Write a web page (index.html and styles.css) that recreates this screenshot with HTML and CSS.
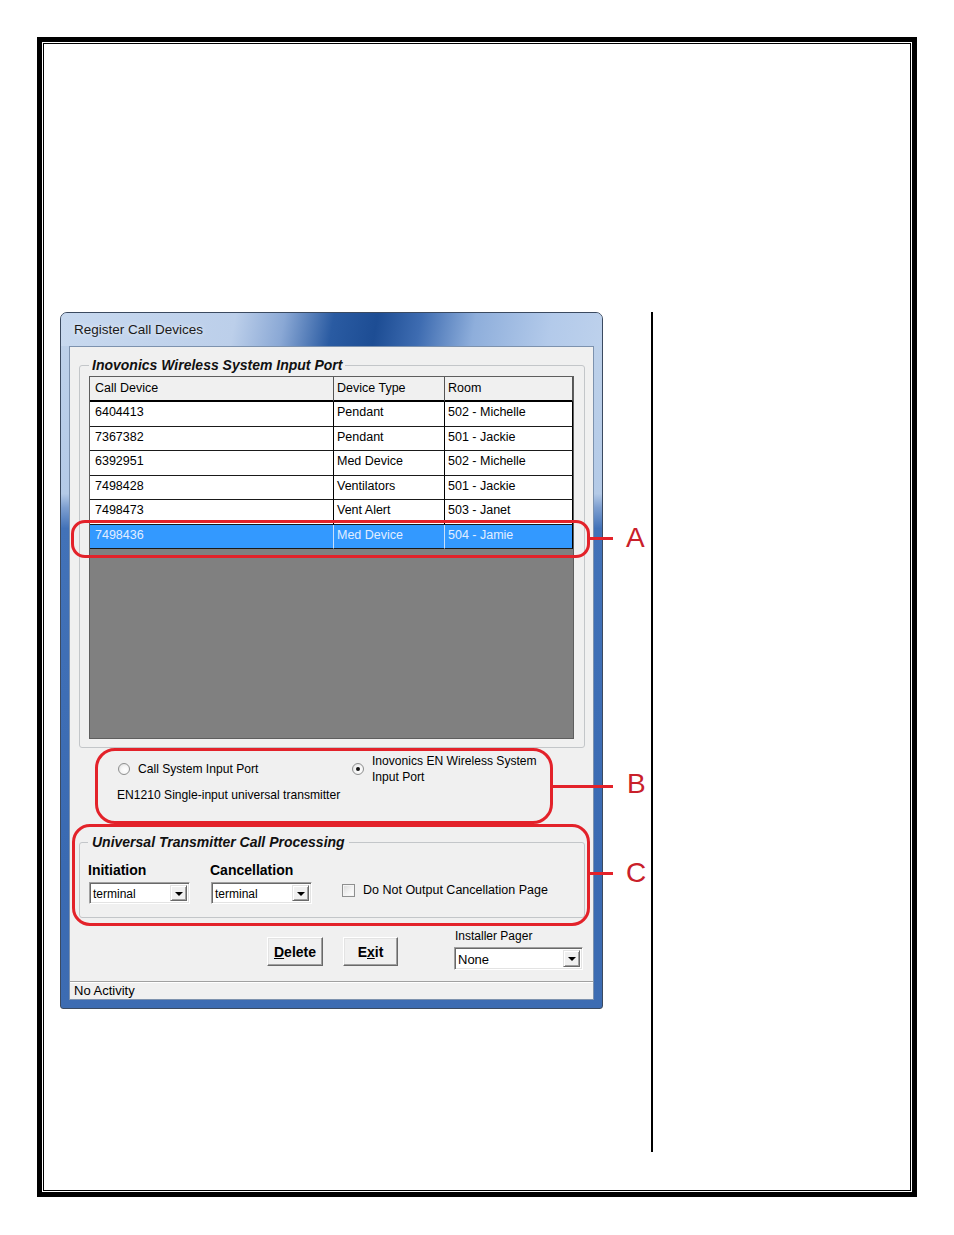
FILE: index.html
```html
<!DOCTYPE html>
<html>
<head>
<meta charset="utf-8">
<title>Register Call Devices</title>
<link rel="stylesheet" href="styles.css">
</head>
<body>
<div class="page">
  <div class="frame">
    <div class="frame-inner">
      <div class="figure">
        <div class="window">
          <div class="titlebar"><span class="title">Register Call Devices</span></div>
          <div class="client">
            <fieldset class="group group-devices">
              <legend>Inovonics Wireless System Input Port</legend>
              <div class="grid">
                <table>
                  <colgroup><col class="c1"><col class="c2"><col class="c3"></colgroup>
                  <thead>
                    <tr><th>Call Device</th><th>Device Type</th><th>Room</th></tr>
                  </thead>
                  <tbody>
                    <tr><td>6404413</td><td>Pendant</td><td>502 - Michelle</td></tr>
                    <tr><td>7367382</td><td>Pendant</td><td>501 - Jackie</td></tr>
                    <tr><td>6392951</td><td>Med Device</td><td>502 - Michelle</td></tr>
                    <tr><td>7498428</td><td>Ventilators</td><td>501 - Jackie</td></tr>
                    <tr><td>7498473</td><td>Vent Alert</td><td>503 - Janet</td></tr>
                    <tr class="selected"><td>7498436</td><td>Med Device</td><td>504 - Jamie</td></tr>
                  </tbody>
                </table>
              </div>
            </fieldset>
            <div class="ports">
              <div class="port-options">
                <div class="radio"><span class="radio-dot"></span><span>Call System Input Port</span></div>
                <div class="radio radio-on"><span class="radio-dot"></span><span>Inovonics EN Wireless System<br>Input Port</span></div>
              </div>
              <div class="port-desc">EN1210 Single-input universal transmitter</div>
            </div>
            <fieldset class="group group-proc">
              <legend>Universal Transmitter Call Processing</legend>
              <div class="proc-row">
                <div class="field field-init">
                  <div class="field-label">Initiation</div>
                  <div class="combo"><span class="combo-text">terminal</span><span class="combo-btn"></span></div>
                </div>
                <div class="field field-cancel">
                  <div class="field-label">Cancellation</div>
                  <div class="combo"><span class="combo-text">terminal</span><span class="combo-btn"></span></div>
                </div>
                <div class="check"><span class="check-box"></span><span>Do Not Output Cancellation Page</span></div>
              </div>
            </fieldset>
            <div class="actions">
              <button class="btn btn-delete"><u>D</u>elete</button>
              <button class="btn btn-exit">E<u>x</u>it</button>
              <div class="pager">
                <div class="pager-label">Installer Pager</div>
                <div class="combo combo-pager"><span class="combo-text">None</span><span class="combo-btn"></span></div>
              </div>
            </div>
            <div class="status">No Activity</div>
          </div>
        </div>
        <div class="note note-a"></div>
        <div class="lead lead-a"></div>
        <div class="tag tag-a">A</div>
        <div class="note note-b"></div>
        <div class="lead lead-b"></div>
        <div class="tag tag-b">B</div>
        <div class="note note-c"></div>
        <div class="lead lead-c"></div>
        <div class="tag tag-c">C</div>
      </div>
      <div class="vline"></div>
    </div>
  </div>
</div>
</body>
</html>
```

FILE: styles.css
```css
* { box-sizing: border-box; }
html, body { margin: 0; padding: 0; background: #fff; }
body {
  font-family: "Liberation Sans", Arial, sans-serif;
  color: #000;
  width: 954px;
  height: 1235px;
}

.page { padding: 37px 0 0 37px; }
.frame {
  width: 880px;
  height: 1160px;
  border: 5px solid #000;
  padding: 1px;
  background: #fff;
}
.frame-inner {
  height: 100%;
  border: 1px solid #000;
  padding: 268px 0 0 16px;
  display: flex;
  align-items: flex-start;
}
.figure { position: relative; width: 591px; flex: none; }
.vline { width: 2px; height: 840px; background: #000; flex: none; }

/* window */
.window {
  width: 543px;
  border: 1px solid #3b4a60;
  border-radius: 7px 7px 3px 3px;
  padding: 0 8px 8px;
  background: linear-gradient(to bottom, #bfd2ea 0%, #b4cae7 26%, #7e9fd0 28%, #4272b8 31%, #3a6ab2 80%, #3d6cb2 100%);
}
.titlebar {
  height: 33px;
  margin: 0 -8px;
  padding: 0 0 1px 13px;
  display: flex;
  align-items: center;
  border-radius: 6px 6px 0 0;
  background: linear-gradient(100deg, #c8d9ef 0%, #bccfea 32%, #8aa8d5 41%, #2a5ba2 50%, #1d4d94 58%, #3e6cb1 66%, #8eaedb 76%, #b3caea 90%, #bdd1ec 100%);
}
.title { font-size: 13.5px; color: #1a1a1a; text-shadow: 0 0 5px rgba(255,255,255,.85); }
.client {
  border: 1px solid #7d92ae;
  background: #f0f0f0;
}

/* group boxes */
.group {
  border: 1px solid #c3c6c9;
  border-radius: 3px;
  min-width: 0;
}
.group legend {
  font-size: 14px;
  font-weight: bold;
  font-style: italic;
  line-height: 16px;
  color: #111;
}
.group-devices { margin: 10px 8px 0 9px; padding: 3px 10px 8px 9px; }
.group-devices legend { padding: 0 3px; }

/* data grid */
.grid {
  height: 363px;
  border: 1px solid #5e5e5e;
  background: #808080;
  overflow: hidden;
}
.grid table {
  width: 483px;
  border-collapse: separate;
  border-spacing: 0;
  table-layout: fixed;
  font-size: 12.5px;
}
.c1 { width: 244px; }
.c2 { width: 111px; }
.c3 { width: 128px; }
.grid thead tr { height: 25px; }
.grid tbody tr { height: 24.5px; }
.grid th {
  background: #f0f0f0;
  font-weight: normal;
  text-align: left;
  padding: 0 0 0 3px;
  border-right: 1px solid #555;
  border-bottom: 2px solid #000;
  vertical-align: middle;
  line-height: 15px;
}
.grid td {
  background: #fff;
  padding: 3px 3px 0;
  border-right: 1px solid #000;
  border-bottom: 1px solid #1a1a1a;
  vertical-align: top;
  line-height: 15px;
  white-space: nowrap;
}
.grid th:first-child, .grid td:first-child { padding-left: 5px; }
.grid tr.selected td {
  background: #3399ff;
  color: #e2eeff;
  border-right-color: #c9e0fa;
}
.grid tr.selected td:last-child { border-right-color: #000; }

/* port choice */
.ports { padding: 5px 0 0 48px; font-size: 12.1px; line-height: 16px; }
.port-options {
  display: grid;
  grid-template-columns: 234px auto;
  align-items: center;
}
.radio { display: flex; align-items: center; gap: 8px; }
.radio-dot {
  position: relative;
  flex: none;
  width: 12px;
  height: 12px;
  border-radius: 50%;
  border: 1px solid #8e8f8f;
  background: radial-gradient(circle at 60% 60%, #ffffff 0%, #f6f6f6 45%, #d6d6d6 100%);
}
.radio-on .radio-dot::after {
  content: "";
  position: absolute;
  left: 3px;
  top: 3px;
  width: 4px;
  height: 4px;
  border-radius: 50%;
  background: #121212;
}
.port-desc { margin: 2px 0 0 -1px; }

/* call processing */
.group-proc { margin: 31px 8px 0 9px; padding: 12px 10px 13px 8px; }
.group-proc legend { padding: 0 4px; }
.proc-row { display: flex; align-items: flex-end; }
.field-label { font-size: 14px; font-weight: bold; line-height: 16px; }
.field-init { width: 122px; flex: none; }
.field-cancel { width: 132px; flex: none; }
.field .combo { margin: 4px 0 0 1px; width: 101px; }

.combo {
  display: flex;
  align-items: stretch;
  height: 22px;
  background: #fff;
  border: 1px solid;
  border-color: #a0a0a0 #ffffff #ffffff #a0a0a0;
  box-shadow: inset 1px 1px 0 #696969, inset -1px -1px 0 #e3e3e3;
  font-size: 12px;
}
.combo-text {
  flex: 1;
  padding: 1px 0 0 3px;
  display: flex;
  align-items: center;
}
.combo-btn {
  flex: none;
  width: 17px;
  margin: 2px 2px 2px 0;
  background: #f0f0f0;
  border: 1px solid;
  border-color: #e3e3e3 #696969 #696969 #e3e3e3;
  box-shadow: inset 1px 1px 0 #fff, inset -1px -1px 0 #a0a0a0;
  display: flex;
  align-items: center;
  justify-content: center;
}
.combo-btn::after {
  content: "";
  width: 0;
  height: 0;
  border-left: 4px solid transparent;
  border-right: 4px solid transparent;
  border-top: 4px solid #000;
  margin-top: 1px;
}

.check {
  display: flex;
  align-items: center;
  gap: 8px;
  font-size: 12.5px;
  line-height: 16px;
  margin-bottom: 6px;
}
.check-box {
  flex: none;
  width: 13px;
  height: 13px;
  border: 1px solid #8e8f8f;
  background: linear-gradient(135deg, #d9d9d9 0%, #f2f2f2 55%, #ffffff 100%);
  box-shadow: inset 0 0 0 1px #f4f4f4;
}

/* actions */
.actions {
  display: flex;
  align-items: flex-end;
  margin-top: 10px;
  padding-left: 197px;
}
.btn {
  font: bold 14px "Liberation Sans", Arial, sans-serif;
  height: 29px;
  padding: 0;
  color: #000;
  background: #f0f0f0;
  border: 1px solid;
  border-color: #ffffff #696969 #696969 #ffffff;
  box-shadow: inset -1px -1px 0 #a0a0a0, inset 1px 1px 0 #e3e3e3;
  margin-bottom: 4px;
}
.btn-delete { width: 56px; }
.btn-exit { width: 55px; margin-left: 20px; }
.pager { margin-left: 56px; width: 129px; }
.pager-label { font-size: 12px; line-height: 16px; margin-left: 1px; }
.combo-pager { margin-top: 3px; height: 23px; font-size: 13px; }

.status {
  margin-top: 11px;
  height: 18px;
  border-top: 1px solid #a0a0a0;
  box-shadow: inset 0 1px 0 #fff;
  padding-left: 4px;
  font-size: 13px;
  line-height: 17px;
}

/* red annotations */
.note {
  position: absolute;
  border: 3px solid #e3222a;
  border-radius: 14px;
}
.note-a { left: 11px; top: 208px; width: 519px; height: 38px; }
.note-b { left: 35px; top: 436px; width: 458px; height: 76px; border-radius: 20px; }
.note-c { left: 12px; top: 512px; width: 518px; height: 102px; border-radius: 18px; }
.lead { position: absolute; height: 3px; background: #e3222a; }
.lead-a { left: 530px; top: 225px; width: 23px; }
.lead-b { left: 493px; top: 473px; width: 60px; }
.lead-c { left: 530px; top: 560px; width: 23px; }
.tag {
  position: absolute;
  font-size: 28px;
  line-height: 28px;
  color: #c9202a;
}
.tag-a { left: 566px; top: 212px; }
.tag-b { left: 567px; top: 458px; }
.tag-c { left: 566px; top: 547px; }
```
